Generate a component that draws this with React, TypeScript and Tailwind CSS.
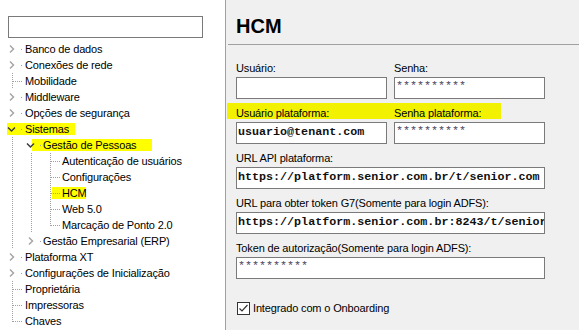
import React from 'react';

type Kind = 'collapsed' | 'expanded' | 'leaf';

type Node = {
  label: string;
  level: number;
  kind: Kind;
  last?: boolean;
  mark?: string;
};

const tree: Node[] = [
  { label: 'Banco de dados', level: 0, kind: 'collapsed' },
  { label: 'Conexões de rede', level: 0, kind: 'collapsed' },
  { label: 'Mobilidade', level: 0, kind: 'leaf' },
  { label: 'Middleware', level: 0, kind: 'collapsed' },
  { label: 'Opções de segurança', level: 0, kind: 'collapsed' },
  { label: 'Sistemas', level: 0, kind: 'expanded', mark: 'left-[7px] w-[68px]' },
  { label: 'Gestão de Pessoas', level: 1, kind: 'expanded', mark: 'left-[32px] w-[120px]' },
  { label: 'Autenticação de usuários', level: 2, kind: 'leaf' },
  { label: 'Configurações', level: 2, kind: 'leaf' },
  { label: 'HCM', level: 2, kind: 'leaf', mark: 'left-[52px] w-[34px]' },
  { label: 'Web 5.0', level: 2, kind: 'leaf' },
  { label: 'Marcação de Ponto 2.0', level: 2, kind: 'leaf', last: true },
  { label: 'Gestão Empresarial (ERP)', level: 1, kind: 'collapsed', last: true },
  { label: 'Plataforma XT', level: 0, kind: 'collapsed' },
  { label: 'Configurações de Inicialização', level: 0, kind: 'collapsed' },
  { label: 'Proprietária', level: 0, kind: 'leaf' },
  { label: 'Impressoras', level: 0, kind: 'leaf' },
  { label: 'Chaves', level: 0, kind: 'leaf', last: true },
];

const gutterWidth = [25, 43, 62];
const guidesFor = [[], [12], [12, 31]];

// tree lines + expander glyph for one row
function Gutter({ node }: { node: Node }) {
  const base = node.level * 19;
  const dot = '#a0a0a0';
  return (
    <svg width={gutterWidth[node.level]} height={16} className="shrink-0" shapeRendering="crispEdges">
      {guidesFor[node.level].map((x) => (
        <line key={x} x1={x + 0.5} y1={0} x2={x + 0.5} y2={16} stroke={dot} strokeDasharray="1 1" />
      ))}
      {node.kind === 'leaf' ? (
        <>
          <line x1={base + 12.5} y1={0} x2={base + 12.5} y2={node.last ? 9 : 16} stroke={dot} strokeDasharray="1 1" />
          <line x1={base + 13} y1={8.5} x2={base + 23} y2={8.5} stroke={dot} strokeDasharray="1 1" />
        </>
      ) : (
        <>
          <rect x={base + 21} y={8} width={1} height={1} fill={dot} />
          {node.kind === 'collapsed' ? (
            <polyline
              points={`${base + 10},4.5 ${base + 13.5},8 ${base + 10},11.5`}
              fill="none"
              stroke="#a6a6a6"
              strokeWidth={1.5}
              shapeRendering="auto"
            />
          ) : (
            <polyline
              points={`${base + 8},6.5 ${base + 11.5},10 ${base + 15},6.5`}
              fill="none"
              stroke="#3c3c3c"
              strokeWidth={1.5}
              shapeRendering="auto"
            />
          )}
        </>
      )}
    </svg>
  );
}

function TreeRow({ node }: { node: Node }) {
  return (
    <div className="relative flex items-center h-4">
      {node.mark && <div className={`absolute top-[2px] h-[12px] bg-[#ffff00] ${node.mark}`} />}
      <div className="relative flex items-center">
        <Gutter node={node} />
        <span className="leading-4 whitespace-nowrap">{node.label}</span>
      </div>
    </div>
  );
}

function Field({
  label,
  value,
  kind = 'text',
  wide,
}: {
  label: string;
  value?: string;
  kind?: 'text' | 'secret' | 'url';
  wide?: boolean;
}) {
  return (
    <div className={`flex flex-col ${wide ? 'w-[309px]' : 'w-[151px]'}`}>
      <label className="relative h-[13px] leading-[13px] whitespace-nowrap">{label}</label>
      <div className="mt-[2px] h-[22px] border border-[#7a7a7a] bg-white flex items-center pl-[1px] overflow-hidden">
        {value && (
          <span
            className={`font-['Liberation_Mono','Courier_New',monospace] text-[11.7px] tracking-normal whitespace-nowrap ${
              kind === 'secret' ? 'text-[#4b4660] -mt-[3px]' : 'text-[#101010] font-bold'
            }`}
          >
            {value}
          </span>
        )}
      </div>
    </div>
  );
}

export default function App() {
  const secret = '**********';

  return (
    <div className="flex w-[579px] h-[330px] overflow-hidden text-[11px] tracking-[-0.15px] text-black font-['Liberation_Sans',Arial,sans-serif]">
      <aside className="w-[226px] h-full bg-white border-r border-[#a0a0a0] overflow-hidden shrink-0">
        <div className="pt-[16px] pl-[8px]">
          <div className="w-[195px] h-[22px] border border-[#7a7a7a] bg-white" />
        </div>
        <div className="mt-[3px]">
          {tree.map((node) => (
            <TreeRow key={node.label} node={node} />
          ))}
        </div>
      </aside>

      <main className="flex-1 h-full bg-[#f0f0f0] flex flex-col">
        <div className="h-[45px] ml-[2px] border-b border-[#a0a0a0] pl-[8px] pt-[15px]">
          <h1 className="text-[20px] leading-[23px] font-bold tracking-normal">HCM</h1>
        </div>

        <div className="pl-[10px] pt-[17px] flex flex-col gap-[8px]">
          <div className="flex gap-[7px]">
            <Field label="Usuário:" />
            <Field label="Senha:" value={secret} kind="secret" />
          </div>

          <div className="relative flex gap-[7px]">
            <div className="absolute -left-[9px] -top-[4px] w-[274px] h-[16px] bg-[#f2f200]" />
            <div className="relative flex gap-[7px]">
              <Field label="Usuário plataforma:" value="usuario@tenant.com" />
              <Field label="Senha plataforma:" value={secret} kind="secret" />
            </div>
          </div>

          <Field label="URL API plataforma:" value="https://platform.senior.com.br/t/senior.com" kind="url" wide />
          <Field
            label="URL para obter token G7(Somente para login ADFS):"
            value="https://platform.senior.com.br:8243/t/senior.com"
            kind="url"
            wide
          />
          <Field label="Token de autorização(Somente para login ADFS):" value={secret} kind="secret" wide />

          <div className="mt-[15px] flex items-center pl-[1px]">
            <div className="w-[13px] h-[13px] border border-[#333333] bg-white flex items-center justify-center">
              <svg width="11" height="11" viewBox="0 0 11 11">
                <polyline points="1.5,5.5 4,8 9.5,2" fill="none" stroke="#333333" strokeWidth={1.2} />
              </svg>
            </div>
            <span className="ml-[3px] leading-[13px]">Integrado com o Onboarding</span>
          </div>
        </div>
      </main>
    </div>
  );
}
